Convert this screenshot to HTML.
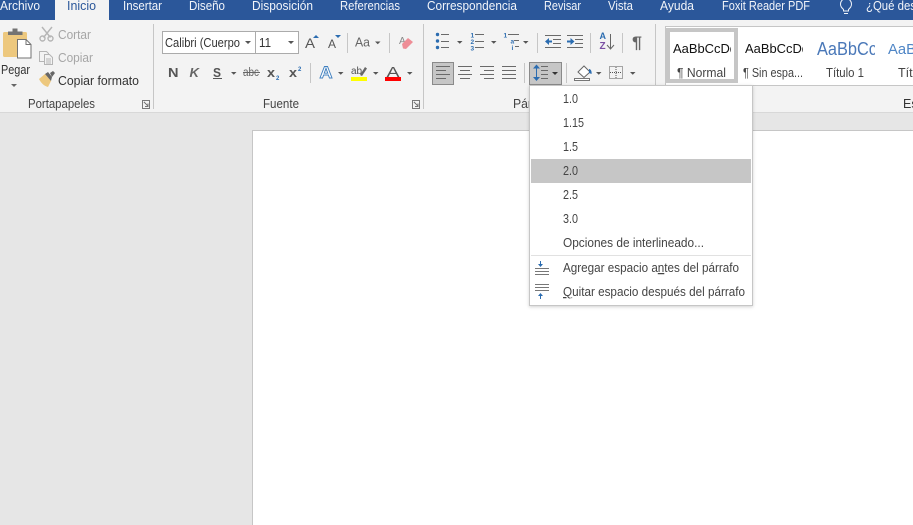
<!DOCTYPE html>
<html lang="es"><head><meta charset="utf-8"><title>Word</title>
<style>
html,body{margin:0;padding:0;width:913px;height:525px;overflow:hidden;background:#e6e6e6}
svg{display:block}
text{font-family:"Liberation Sans",sans-serif;font-size:12.5px;fill:#444}
.t text{fill:#f2f5fa;font-size:12.5px}
.ar{fill:#555}
.l{stroke:#6a6a6a;stroke-width:1;fill:none}
</style></head><body>
<svg width="913" height="525" viewBox="0 0 913 525" xmlns="http://www.w3.org/2000/svg" shape-rendering="crispEdges">
<defs>
<filter id="sh" x="-5%" y="-5%" width="110%" height="110%"><feDropShadow dx="0" dy="1" stdDeviation="1.500" flood-color="#000" flood-opacity=".18"/></filter>
<clipPath id="c1"><rect x="671" y="38" width="60" height="20"/></clipPath>
<clipPath id="c2"><rect x="743" y="38" width="60" height="20"/></clipPath>
<clipPath id="c3"><rect x="815" y="34" width="60" height="26"/></clipPath>
</defs>
<!-- backgrounds -->
<rect width="913" height="525" fill="#e6e6e6"/>
<rect x="0" y="0" width="913" height="20" fill="#2b579a"/>
<rect x="0" y="20" width="913" height="92" fill="#f3f3f3"/>
<rect x="0" y="112" width="913" height="1" fill="#d8d8d8"/>
<rect x="55" y="0" width="54" height="20" fill="#f3f3f3"/>
<rect x="252.500" y="130.500" width="670" height="400" fill="#fff" stroke="#c6c6c6"/>
<!-- tabs -->
<g class="t">
<text x="0" y="10" textLength="40" lengthAdjust="spacingAndGlyphs">Archivo</text>
<text x="67" y="10" textLength="29" lengthAdjust="spacingAndGlyphs" style="fill:#2b579a">Inicio</text>
<text x="123" y="10" textLength="39" lengthAdjust="spacingAndGlyphs">Insertar</text>
<text x="189" y="10" textLength="36" lengthAdjust="spacingAndGlyphs">Diseño</text>
<text x="252" y="10" textLength="61" lengthAdjust="spacingAndGlyphs">Disposición</text>
<text x="340" y="10" textLength="60" lengthAdjust="spacingAndGlyphs">Referencias</text>
<text x="427" y="10" textLength="90" lengthAdjust="spacingAndGlyphs">Correspondencia</text>
<text x="544" y="10" textLength="37" lengthAdjust="spacingAndGlyphs">Revisar</text>
<text x="608" y="10" textLength="25" lengthAdjust="spacingAndGlyphs">Vista</text>
<text x="660" y="10" textLength="34" lengthAdjust="spacingAndGlyphs">Ayuda</text>
<text x="722" y="10" textLength="88" lengthAdjust="spacingAndGlyphs">Foxit Reader PDF</text>
<text x="866" y="10" textLength="50" lengthAdjust="spacingAndGlyphs">¿Qué des</text>
</g>
<g shape-rendering="auto" fill="none" stroke="#f2f5fa" stroke-width="1">
<path d="M843.500 9.500c-2-2-3-3-3-5.500a5.500 5.500 0 0 1 11 0c0 2.500-1 3.500-3 5.500v1.500h-5z"/><path d="M844 13.500h4"/>
</g>
<!-- separators -->
<g fill="#c6c6c6">
<rect x="153" y="24" width="1" height="85"/>
<rect x="423" y="24" width="1" height="85"/>
<rect x="655" y="24" width="1" height="85"/>
<rect x="347" y="33" width="1" height="20"/>
<rect x="389" y="33" width="1" height="20"/>
<rect x="310" y="63" width="1" height="20"/>
<rect x="537" y="33" width="1" height="20"/>
<rect x="590" y="33" width="1" height="20"/>
<rect x="622" y="33" width="1" height="20"/>
<rect x="524" y="63" width="1" height="20"/>
<rect x="566" y="63" width="1" height="20"/>
</g>
<!-- Portapapeles -->
<g shape-rendering="auto">
<rect x="3" y="32" width="24" height="25" rx="1.500" fill="#edc87e"/>
<path d="M8 35v-3.500h4.500v-3h5v3h5v3.500z" fill="#737373"/>
<path d="M17.500 39.500h8.500l5 5v13.500h-13.500z" fill="#fff" stroke="#737373"/>
<path d="M26 39.500v5h5" fill="none" stroke="#737373"/>
<path d="M11 84l3 3 3-3z" fill="#666"/>
<g stroke="#b5b5b5" stroke-width="1.400" fill="none"><path d="M42 27l8.500 10.500M52 27l-8.500 10.500"/><circle cx="42.500" cy="38.500" r="2.500"/><circle cx="50.500" cy="38.500" r="2.500"/></g>
<g stroke="#b5b5b5" fill="#f3f3f3"><path d="M39.500 51.500h7l2 2v8h-9z"/><path d="M44.500 54.500h5l3 3v7h-8z"/><path d="M46 59h5M46 61h5M46 63h5" fill="none"/></g>
<path d="M39 79l6-5 6 7-3 6c-4-1-7-4-9-8z" fill="#edc87e"/>
<path d="M45 74l3-2 4 5-1 4z" fill="#666"/><path d="M50 73l3-2 2 2-3 4z" fill="#666"/>
</g>
<text x="1" y="74" textLength="29" lengthAdjust="spacingAndGlyphs" style="fill:#333">Pegar</text>
<text x="58" y="39" textLength="33" lengthAdjust="spacingAndGlyphs" style="fill:#a6a6a6">Cortar</text>
<text x="58" y="62" textLength="35" lengthAdjust="spacingAndGlyphs" style="fill:#a6a6a6">Copiar</text>
<text x="58" y="85" textLength="81" lengthAdjust="spacingAndGlyphs" style="fill:#333">Copiar formato</text>
<text x="28" y="108" textLength="67" lengthAdjust="spacingAndGlyphs">Portapapeles</text>
<path d="M142.500 100.500h7v8h-7zM144 102l4 4M148 103.500v3h-3" fill="none" stroke="#777"/>
<!-- Fuente -->
<rect x="162.500" y="31.500" width="93" height="22" fill="#fff" stroke="#ababab"/>
<rect x="255.500" y="31.500" width="43" height="22" fill="#fff" stroke="#ababab"/>
<text x="165" y="47" textLength="75" lengthAdjust="spacingAndGlyphs" style="fill:#333">Calibri (Cuerpo</text>
<rect x="241" y="33" width="14" height="19" fill="#fff"/>
<text x="259" y="47" textLength="12" lengthAdjust="spacingAndGlyphs" style="fill:#333">11</text>
<path class="ar" d="M245 41h6l-3 3zM288 41h6l-3 3z" shape-rendering="auto"/>
<text x="168" y="77" textLength="10.500" lengthAdjust="spacingAndGlyphs" style="font-size:13px;font-weight:700;fill:#555">N</text>
<text x="189.500" y="77" textLength="9.500" lengthAdjust="spacingAndGlyphs" style="font-size:13px;font-weight:700;font-style:italic;fill:#666">K</text>
<text x="213" y="77" textLength="8" lengthAdjust="spacingAndGlyphs" style="font-size:13px;font-weight:700;fill:#555">S</text>
<rect x="213" y="78" width="9" height="1" fill="#555"/>
<path class="ar" d="M231 72h5.500l-2.750 2.750z" shape-rendering="auto"/>
<text x="243" y="76" textLength="16" lengthAdjust="spacingAndGlyphs" style="font-size:11.500px;fill:#666">abc</text>
<rect x="243" y="72" width="17" height="1" fill="#666"/>
<text x="267" y="77" textLength="8" lengthAdjust="spacingAndGlyphs" style="font-size:13px;font-weight:700;fill:#555">x</text>
<text x="276" y="80" style="font-size:6px;font-weight:700;fill:#2b6cb0">2</text>
<text x="289" y="77" textLength="8" lengthAdjust="spacingAndGlyphs" style="font-size:13px;font-weight:700;fill:#555">x</text>
<text x="298" y="71" style="font-size:6px;font-weight:700;fill:#2b6cb0">2</text>
<text x="305" y="48" textLength="10" lengthAdjust="spacingAndGlyphs" style="font-size:14px;fill:#555">A</text>
<path d="M313 38h6l-3-3z" fill="#2b6cb0" shape-rendering="auto"/>
<text x="328" y="48" textLength="8" lengthAdjust="spacingAndGlyphs" style="font-size:12px;fill:#555">A</text>
<path d="M335 35h6l-3 3z" fill="#2b6cb0" shape-rendering="auto"/>
<text x="355" y="46.500" textLength="15" lengthAdjust="spacingAndGlyphs" style="font-size:13px;fill:#666">Aa</text>
<path class="ar" d="M375 41.500h5.500l-2.750 2.750z" shape-rendering="auto"/>
<g shape-rendering="auto">
<text x="399" y="44" style="font-size:10px;fill:#888">A</text>
<path d="M402 44l6-6 5 4-7 7-3-.5z" fill="#ee8d96"/>
</g>
<!-- row2 colours -->
<g shape-rendering="auto"><text x="319.500" y="78" textLength="13" lengthAdjust="spacingAndGlyphs" style="font-size:17px;font-weight:700;fill:#fff;stroke:#3f7fbf;stroke-width:.9">A</text></g>
<path class="ar" d="M338 72h5.500l-2.750 2.750zM373 72h5.500l-2.750 2.750zM407 72h5.500l-2.750 2.750z" shape-rendering="auto"/>
<text x="351" y="74" style="font-size:10px;fill:#555">ab</text>
<path d="M360 75l5-8 2 1.500-5 7.500z" fill="#666" shape-rendering="auto"/>
<rect x="351" y="77" width="16" height="4" fill="#ffff00"/>
<text x="386.500" y="77" textLength="13" lengthAdjust="spacingAndGlyphs" style="font-size:15px;fill:#555">A</text>
<rect x="385" y="77" width="16" height="4" fill="#ff0000"/>
<text x="263" y="108" textLength="36" lengthAdjust="spacingAndGlyphs">Fuente</text>
<path d="M412.500 100.500h7v8h-7zM414 102l4 4M418 103.500v3h-3" fill="none" stroke="#777"/>
<!-- Parrafo row 1 -->
<g class="l">
<path d="M441 34.500h8M441 41.500h8M441 47.500h8"/>
<path d="M475 34.500h9M475 41.500h9M475 47.500h9"/>
<path d="M508 34.500h11M514 40.500h5M515 46.500h4"/>
<path d="M545 35.500h16M553 39.500h8M553 43.500h8M545 47.500h16"/>
<path d="M567 35.500h16M575 39.500h8M575 43.500h8M567 47.500h16"/>
</g>
<g fill="#2b6cb0" shape-rendering="auto">
<circle cx="437.500" cy="34.500" r="1.700"/><circle cx="437.500" cy="41" r="1.700"/><circle cx="437.500" cy="47.500" r="1.700"/>
<path d="M545 41.500l4-3.500v2.500h3v2h-3v2.500z"/>
<path d="M567 40.500h3.500v-2.500l4 3.500-4 3.500v-2.500h-3.500z"/>
</g>
<text x="470.500" y="37.500" style="font-size:6.500px;font-weight:700;fill:#2b6cb0">1</text>
<text x="470.500" y="44" style="font-size:6.500px;font-weight:700;fill:#2b6cb0">2</text>
<text x="470.500" y="50.500" style="font-size:6.500px;font-weight:700;fill:#2b6cb0">3</text>
<text x="503.500" y="37.500" style="font-size:6.500px;font-weight:700;fill:#2b6cb0">1</text>
<text x="510.500" y="43.500" style="font-size:6.500px;font-weight:700;fill:#2b6cb0">a</text>
<text x="511.500" y="50" style="font-size:6.500px;font-weight:700;fill:#2b6cb0">i</text>
<path class="ar" d="M457 41h5.500l-2.750 2.750zM491 41h5.500l-2.750 2.750zM523 41h5.500l-2.750 2.750z" shape-rendering="auto"/>
<text x="599.500" y="39" style="font-size:9px;font-weight:700;fill:#2b6cb0">A</text>
<text x="599.500" y="49" style="font-size:10px;font-weight:700;fill:#7a4fa3">Z</text>
<path d="M610.500 34v15M607 45l3.500 4 3.500-4" fill="none" stroke="#666" shape-rendering="auto"/>
<text x="632" y="48" textLength="10" lengthAdjust="spacingAndGlyphs" style="font-size:17px;fill:#666;font-weight:700">¶</text>
<!-- Parrafo row 2 -->
<rect x="432.500" y="62.500" width="21" height="22" fill="#c6c6c6" stroke="#8a8a8a"/>
<rect x="529.500" y="62.500" width="32" height="22" fill="#c6c6c6" stroke="#8a8a8a"/>
<g class="l">
<path d="M436 66.500h14M436 70.500h10M436 74.500h14M436 78.500h10" />
<path d="M458 66.500h14M460 70.500h10M458 74.500h14M460 78.500h10"/>
<path d="M480 66.500h14M484 70.500h10M480 74.500h14M484 78.500h10"/>
<path d="M502 66.500h14M502 70.500h14M502 74.500h14M502 78.500h14"/>
<path d="M541 66.500h7M541 70.500h7M541 74.500h7M541 78.500h7"/>
</g>
<path d="M536.500 66v13" stroke="#2b6cb0" fill="none"/>
<path d="M533 68.500l3.500-4 3.500 4zM533 77l3.500 4 3.500-4z" fill="#2b6cb0" shape-rendering="auto"/>
<path d="M552 72h6l-3 3z" fill="#333" shape-rendering="auto"/>
<g shape-rendering="auto">
<path d="M578 72l6-6 6 6-6 5.500z" fill="#fff" stroke="#666"/>
<path d="M589 69c2 0 3 3 2.500 5l-2.500-1z" fill="#2b6cb0"/>
</g>
<rect x="574.500" y="78.500" width="15" height="2" fill="#fff" stroke="#777"/>
<path class="ar" d="M596 72h5.500l-2.750 2.750zM630 72h5.500l-2.750 2.750z" shape-rendering="auto"/>
<path d="M609.500 66.500h13v12h-13zM616 67v11M610 72.500h12" fill="none" stroke="#555" stroke-dasharray="1 1"/>
<text x="513" y="108" textLength="40" lengthAdjust="spacingAndGlyphs">Párrafo</text>
<!-- Styles -->
<rect x="665.500" y="26.500" width="260" height="59" fill="#fff" stroke="#c6c6c6"/>
<rect x="668" y="30" width="68" height="51" fill="#fff" stroke="#c6c6c6" stroke-width="4"/>
<g clip-path="url(#c1)"><text x="673" y="53" textLength="64" lengthAdjust="spacingAndGlyphs" style="fill:#111">AaBbCcDd</text></g>
<g clip-path="url(#c2)"><text x="745" y="53" textLength="64" lengthAdjust="spacingAndGlyphs" style="fill:#111">AaBbCcDd</text></g>
<g clip-path="url(#c3)"><text x="817" y="55" textLength="60" lengthAdjust="spacingAndGlyphs" style="font-size:18px;fill:#4a78b8">AaBbCc</text></g>
<text x="888" y="54" textLength="28" lengthAdjust="spacingAndGlyphs" style="font-size:15px;fill:#4f86c6">AaB</text>
<text x="677" y="77" textLength="49" lengthAdjust="spacingAndGlyphs">¶ Normal</text>
<text x="743" y="77" textLength="60" lengthAdjust="spacingAndGlyphs">¶ Sin espa...</text>
<text x="826" y="77" textLength="38" lengthAdjust="spacingAndGlyphs">Título 1</text>
<text x="898" y="77">Título</text>
<text x="903" y="108" style="fill:#333">Es</text>
<!-- Menu -->
<rect x="529.500" y="85.500" width="223" height="220" fill="#fff" stroke="#c6c6c6" filter="url(#sh)"/>
<rect x="531" y="159" width="220" height="24" fill="#c6c6c6"/>
<rect x="531" y="255" width="220" height="1" fill="#e1e1e1"/>
<g>
<text x="563" y="103" textLength="15" lengthAdjust="spacingAndGlyphs">1.0</text>
<text x="563" y="127" textLength="21" lengthAdjust="spacingAndGlyphs">1.15</text>
<text x="563" y="151" textLength="15" lengthAdjust="spacingAndGlyphs">1.5</text>
<text x="563" y="175" textLength="15" lengthAdjust="spacingAndGlyphs">2.0</text>
<text x="563" y="199" textLength="15" lengthAdjust="spacingAndGlyphs">2.5</text>
<text x="563" y="223" textLength="15" lengthAdjust="spacingAndGlyphs">3.0</text>
<text x="563" y="247" textLength="141" lengthAdjust="spacingAndGlyphs">Opciones de interlineado...</text>
<text x="563" y="272" textLength="176" lengthAdjust="spacingAndGlyphs">Agregar espacio a<tspan text-decoration="underline">n</tspan>tes del párrafo</text>
<text x="563" y="296" textLength="182" lengthAdjust="spacingAndGlyphs"><tspan text-decoration="underline">Q</tspan>uitar espacio después del párrafo</text>
</g>
<path d="M535 268.500h14M535 271.500h14M535 274.500h14M535 284.500h14M535 287.500h14M535 290.500h14" stroke="#777" fill="none"/>
<path d="M540.500 261v4M540.500 295v4" stroke="#2b6cb0" fill="none"/>
<path d="M538 264l2.500 3 2.500-3zM538 296l2.500-3 2.500 3z" fill="#2b6cb0" shape-rendering="auto"/>
</svg>
</body></html>
